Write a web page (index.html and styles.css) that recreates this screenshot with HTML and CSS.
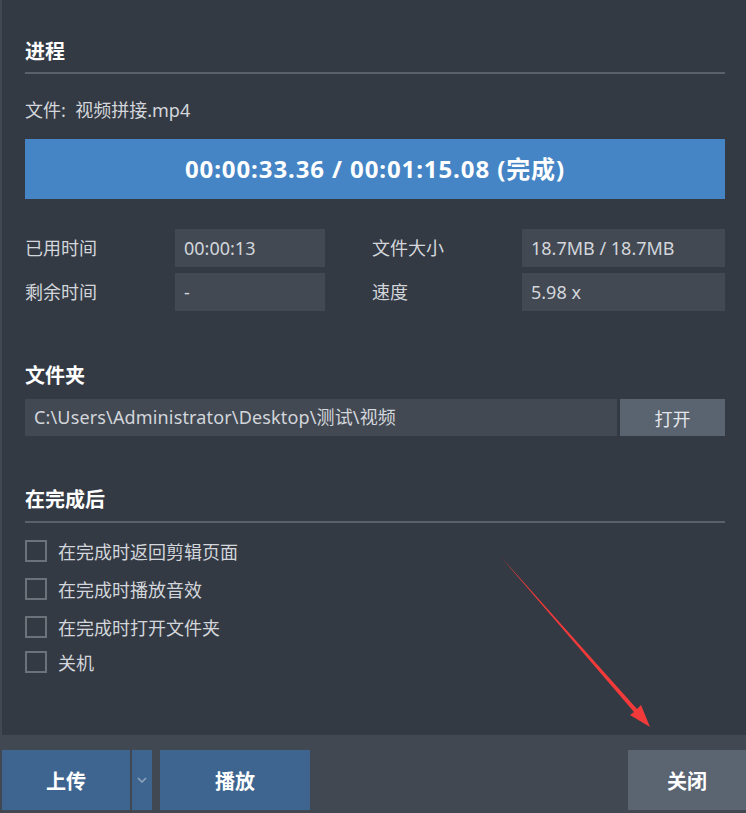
FILE: index.html
```html
<!DOCTYPE html>
<html>
<head>
	<meta charset="UTF-8">
	<title>进程</title>
	<link rel="stylesheet" href="styles.css">
</head>
<body>
	<div class="panel">
		<h2 class="section-title first">进程</h2>
		<div class="file-name">文件:&nbsp; 视频拼接.mp4</div>
		<div class="progress-bar">00:00:33.36 / 00:01:15.08 (完成)</div>

		<div class="stats">
			<div class="stat-label">已用时间</div>
			<div class="stat-value">00:00:13</div>
			<div class="stat-label">文件大小</div>
			<div class="stat-value">18.7MB / 18.7MB</div>
			<div class="stat-label">剩余时间</div>
			<div class="stat-value">-</div>
			<div class="stat-label">速度</div>
			<div class="stat-value">5.98 x</div>
		</div>

		<h2 class="section-title plain">文件夹</h2>
		<div class="folder-row">
			<div class="folder-path">C:\Users\Administrator\Desktop\测试\视频</div>
			<button class="btn btn-open">打开</button>
		</div>

		<h2 class="section-title after">在完成后</h2>
		<div class="checks">
			<label class="check"><span class="box"></span>在完成时返回剪辑页面</label>
			<label class="check"><span class="box"></span>在完成时播放音效</label>
			<label class="check"><span class="box"></span>在完成时打开文件夹</label>
			<label class="check last"><span class="box"></span>关机</label>
		</div>
	</div>

	<div class="footer">
		<button class="btn btn-blue btn-upload">上传</button>
		<button class="btn btn-blue btn-drop">
			<svg width="10" height="6" viewBox="0 0 10 6"><polyline points="1,1 5,5 9,1" fill="none" stroke="#8ea3bd" stroke-width="1.6"/></svg>
		</button>
		<button class="btn btn-blue btn-play">播放</button>
		<div class="spacer"></div>
		<button class="btn btn-close">关闭</button>
	</div>

	<!-- annotation arrow -->
	<svg class="arrow" width="746" height="813" viewBox="0 0 746 813">
		<polygon points="501,557 637,709 641,705 650,727 630,715 634,712" fill="#f23a3a"/>
	</svg>
</body>
</html>
```

FILE: styles.css
```css
/* Basic styles */
html, body {
	margin: 0;
	padding: 0;
}
body {
	width: 746px;
	height: 813px;
	overflow: hidden;
	background-color: #414852;
	font-family: "Noto Sans", "Noto Sans CJK SC", sans-serif;
	font-size: 18px;
	color: #d3d6db;
	position: relative;
}
.panel {
	margin-left: 2px;
	height: 735px;
	box-sizing: border-box;
	padding: 37px 21px 0 23px;
	background-color: #343a44;
}
.section-title {
	margin: 0;
	font-size: 20px;
	font-weight: bold;
	line-height: 30px;
	color: #fff;
}
.section-title.first,
.section-title.after {
	padding-bottom: 5px;
	border-bottom: 2px solid #5b616b;
}
.section-title.plain {
	margin-top: 50px;
}
.section-title.after {
	margin-top: 49px;
	padding-bottom: 6px;
}
.file-name {
	margin-top: 24px;
	line-height: 24px;
}
.progress-bar {
	margin-top: 17px;
	height: 60px;
	line-height: 60px;
	background-color: #4585c5;
	color: #fff;
	font-size: 24px;
	letter-spacing: 0.9px;
	font-weight: bold;
	text-align: center;
}
.stats {
	margin-top: 30px;
	display: grid;
	grid-template-columns: 150px 150px 47px 150px 203px;
	grid-template-rows: 38px 38px;
	row-gap: 6px;
}
.stat-label {
	line-height: 38px;
}
.stat-label:nth-child(4n+3) {
	grid-column: 4;
}
.stat-value {
	background-color: #424953;
	line-height: 38px;
	padding-left: 9px;
}
.stat-value:nth-child(4n+4) {
	grid-column: 5;
}
.folder-row {
	margin-top: 8px;
	display: flex;
	gap: 3px;
	height: 37px;
}
.folder-path {
	flex: 1;
	background-color: #424953;
	line-height: 37px;
	padding-left: 9px;
	letter-spacing: 0.15px;
}
.btn {
	border: none;
	margin: 0;
	padding: 0;
	font-family: inherit;
	font-size: 18px;
	color: #fff;
	cursor: pointer;
}
.btn-open {
	width: 105px;
	background-color: #5a6370;
	color: #e3e6ea;
}
.checks {
	margin-top: 17px;
	display: flex;
	flex-direction: column;
	gap: 16px;
}
.check {
	display: flex;
	align-items: center;
	gap: 11px;
	height: 22px;
}
.check.last {
	margin-top: -3px;
}
.box {
	width: 22px;
	height: 22px;
	box-sizing: border-box;
	border: 2px solid #6c727a;
}
.footer {
	height: 78px;
	box-sizing: border-box;
	padding: 15px 0 3px 2px;
	display: flex;
}
.footer .btn {
	font-weight: bold;
	font-size: 20px;
}
.btn-blue {
	background-color: #3e6590;
}
.btn-upload {
	width: 128px;
}
.btn-drop {
	width: 20px;
	margin-left: 2px;
	display: flex;
	align-items: center;
	justify-content: center;
}
.btn-play {
	width: 150px;
	margin-left: 8px;
}
.spacer {
	flex: 1;
}
.btn-close {
	width: 118px;
	background-color: #5b6471;
}
.arrow {
	position: absolute;
	left: 0;
	top: 0;
	pointer-events: none;
}
```
